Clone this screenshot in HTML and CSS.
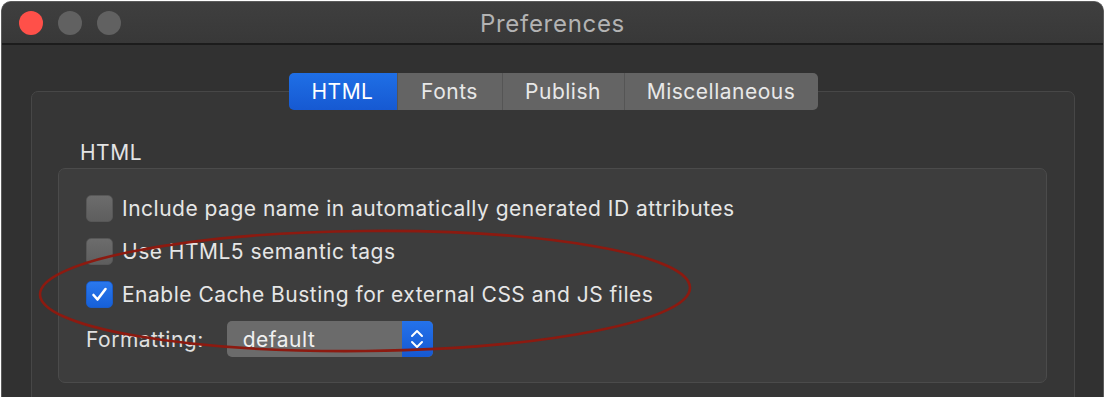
FILE: index.html
```html
<!DOCTYPE html>
<html lang="en">
<head>
  <meta charset="UTF-8" />
  <title>Preferences</title>
  <link rel="stylesheet" href="styles.css">
</head>
<body>
  <div class="ventana">
    <div class="barra-titulo">
      <div class="semaforo">
        <span class="luz roja"></span>
        <span class="luz"></span>
        <span class="luz"></span>
      </div>
      <div class="titulo">Preferences</div>
      <div></div>
    </div>

    <div class="contenido">
      <div class="pestanas">
        <div class="pestana activa">HTML</div>
        <div class="pestana">Fonts</div>
        <div class="pestana">Publish</div>
        <div class="pestana">Miscellaneous</div>
      </div>

      <div class="panel">
        <div class="grupo-titulo">HTML</div>
        <div class="grupo">
          <label class="opcion"><span class="casilla"></span>Include page name in automatically generated ID attributes</label>
          <label class="opcion"><span class="casilla"></span>Use HTML5 semantic tags</label>
          <label class="opcion"><span class="casilla marcada">
            <svg width="19" height="19" viewBox="0 0 19 19"><path d="M3.5 10 L7.5 14.5 L15.5 4" fill="none" stroke="#fff" stroke-width="2.6" stroke-linecap="round" stroke-linejoin="round"/></svg>
          </span>Enable Cache Busting for external CSS and JS files</label>
          <div class="fila-formato">
            <span>Formatting:</span>
            <div class="selector">
              <span class="valor">default</span>
              <span class="flechas">
                <svg width="14" height="24" viewBox="0 0 14 24"><path d="M2 9 L7 4 L12 9 M2 15 L7 20 L12 15" fill="none" stroke="#fff" stroke-width="2" stroke-linecap="round" stroke-linejoin="round"/></svg>
              </span>
            </div>
          </div>
        </div>
      </div>
    </div>
  </div>

  <!-- anotación a mano -->
  <svg class="marca" width="1106" height="397" viewBox="0 0 1106 397">
    <ellipse cx="365" cy="291" rx="325" ry="60" transform="rotate(-0.6 365 291)" fill="none" stroke="#8c1a10" stroke-width="2.6"/>
  </svg>
</body>
</html>
```

FILE: styles.css
```css
body {
  margin: 0;
  padding: 0;
  background: #ffffff;
  font-family: Inter, "Noto Sans", sans-serif;
  overflow: hidden;
}

.ventana {
  margin: 1px 2px 0 1px;
  height: 395px;
  background: #313131;
  border: 1px solid #5c5c5c;
  border-bottom: none;
  border-radius: 10px 10px 0 0;
  overflow: hidden;
}

.barra-titulo {
  height: 41px;
  display: grid;
  grid-template-columns: 1fr auto 1fr;
  align-items: center;
  background: linear-gradient(#3f3f3f, #383838);
  border-bottom: 2px solid #1c1c1c;
}

.semaforo {
  display: flex;
  gap: 15px;
  padding-left: 17px;
}

.luz {
  width: 24px;
  height: 24px;
  border-radius: 50%;
  background: #616161;
}

.luz.roja {
  background: #ff5049;
}

.titulo {
  color: #b3b3b3;
  font-size: 24px;
  letter-spacing: 0.7px;
  padding-top: 2px;
}

.contenido {
  padding: 28px 28px 0 29px;
}

.pestanas {
  display: flex;
  justify-content: center;
  position: relative;
  z-index: 1;
}

.pestana {
  height: 37px;
  display: flex;
  align-items: center;
  justify-content: center;
  background: #646464;
  color: #e8e8e8;
  font-size: 21px;
  letter-spacing: 0.5px;
  border-left: 1px solid #555555;
}

.pestana:nth-child(1) { width: 108px; }
.pestana:nth-child(2) { width: 104px; }
.pestana:nth-child(3) { width: 121px; }
.pestana:nth-child(4) { width: 193px; }

.pestana:first-child {
  border-left: none;
  border-radius: 5px 0 0 5px;
}

.pestana:last-child {
  border-radius: 0 5px 5px 0;
}

.pestana.activa {
  background: linear-gradient(#1f6fe6, #1659d2);
  color: #ffffff;
}

.panel {
  margin-top: -19px;
  height: 340px;
  background: #363636;
  border: 1px solid #474747;
  border-radius: 7px;
  padding: 48px 27px 0 26px;
}

.grupo-titulo {
  color: #e4e4e4;
  font-size: 21px;
  letter-spacing: 0.5px;
  padding-left: 22px;
  height: 26px;
  margin-bottom: 2px;
}

.grupo {
  background: #3d3d3d;
  border: 1px solid #4b4b4b;
  border-radius: 7px;
  padding: 26px 27px 25px 27px;
  display: flex;
  flex-direction: column;
  gap: 16px;
}

.opcion {
  display: flex;
  align-items: center;
  gap: 9px;
  color: #e6e6e6;
  font-size: 21px;
  letter-spacing: 0.5px;
  height: 27px;
}

.casilla {
  width: 27px;
  height: 27px;
  box-sizing: border-box;
  border-radius: 5px;
  background: linear-gradient(#6c6c6c, #5e5e5e);
  border: 1px solid #575757;
  display: flex;
  align-items: center;
  justify-content: center;
}

.casilla.marcada {
  background: linear-gradient(#2a78ee, #1660d8);
  border-color: #1a5cc8;
}

.fila-formato {
  display: flex;
  align-items: center;
  gap: 23px;
  color: #e0e0e0;
  font-size: 21px;
  letter-spacing: 0.5px;
  margin-top: -3px;
}

.selector {
  width: 206px;
  height: 36px;
  display: flex;
  border-radius: 5px;
  overflow: hidden;
  background: #6b6b6b;
}

.valor {
  flex: 1;
  padding-left: 16px;
  display: flex;
  align-items: center;
  color: #f0f0f0;
}

.flechas {
  width: 31px;
  background: linear-gradient(#2472ea, #1659d2);
  display: flex;
  align-items: center;
  justify-content: center;
}

.marca {
  position: absolute;
  left: 0;
  top: 0;
  pointer-events: none;
}
```
